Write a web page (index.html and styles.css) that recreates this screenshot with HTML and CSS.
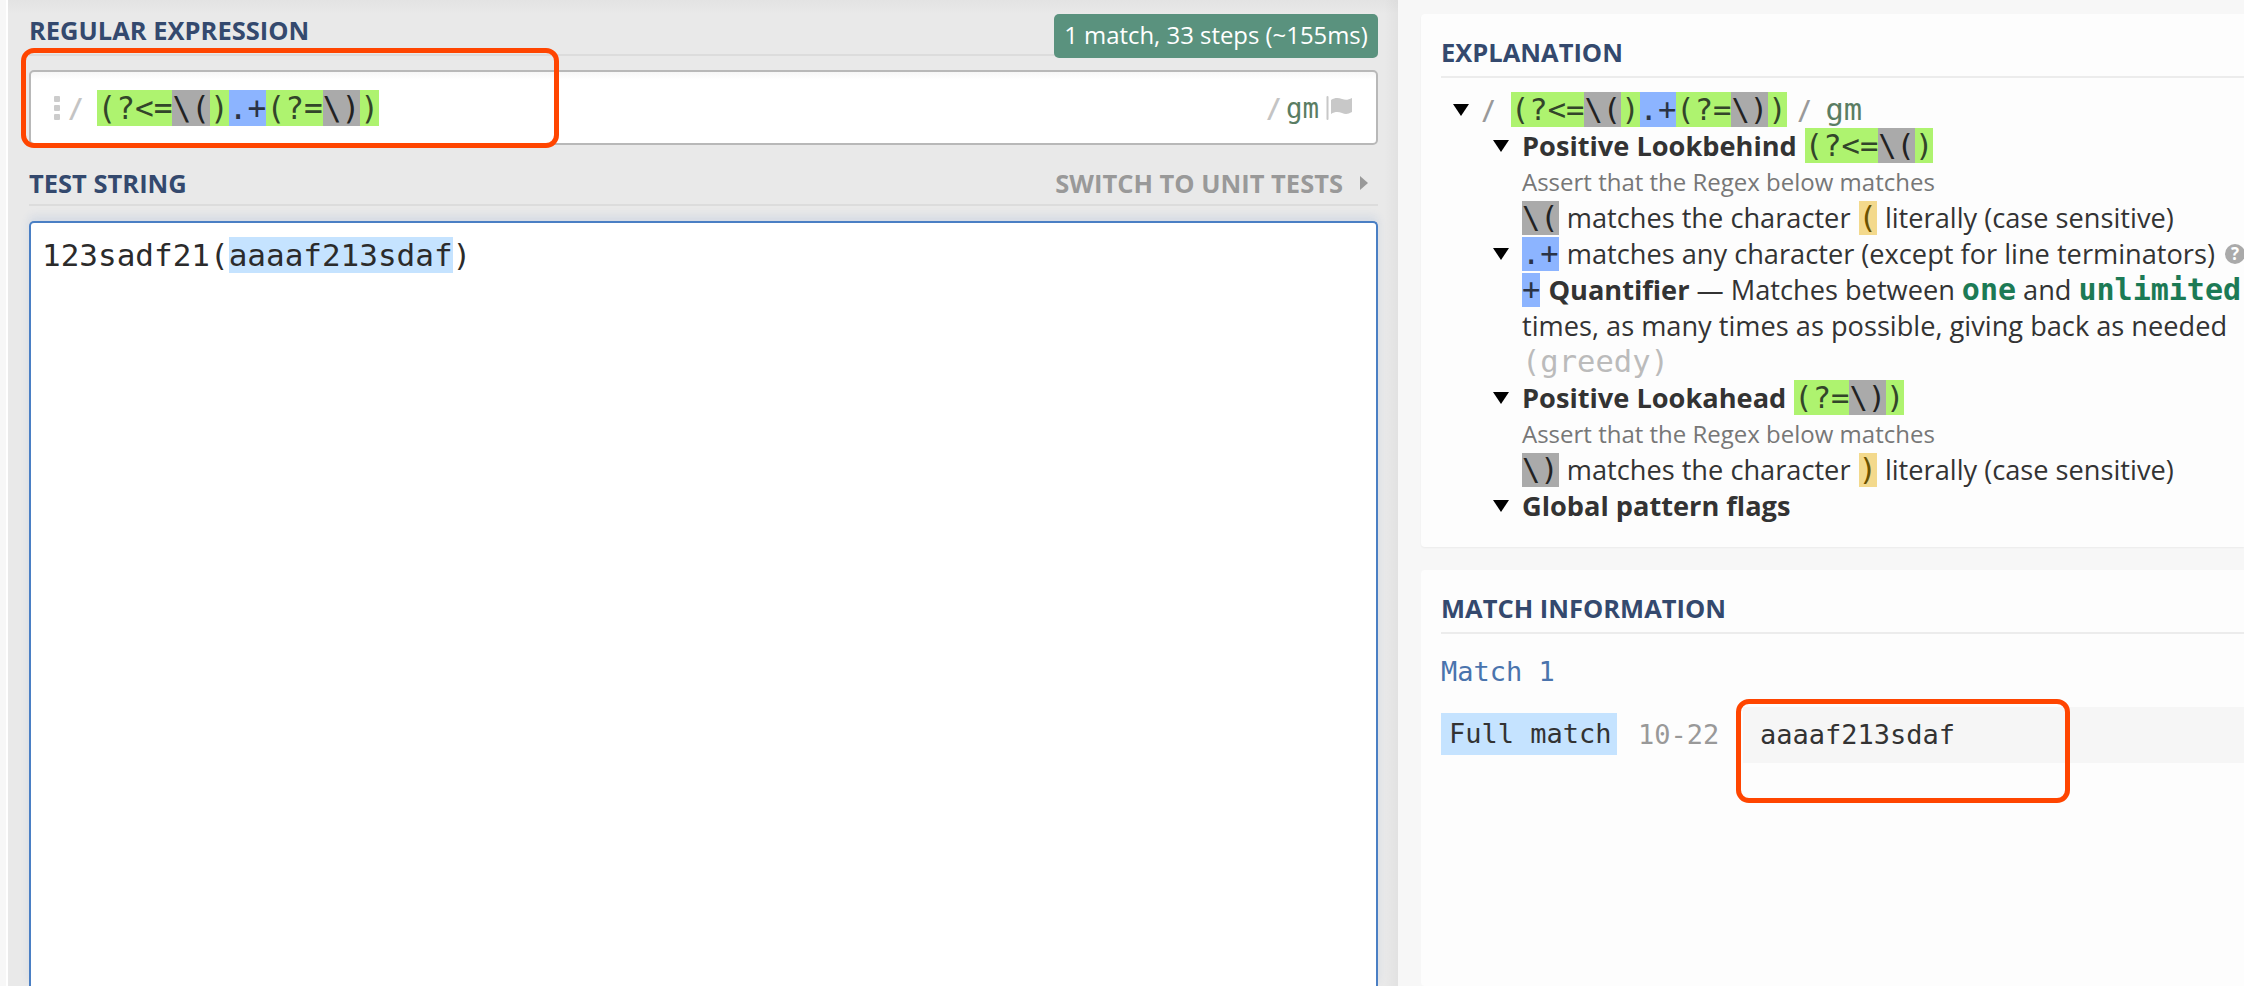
FILE: index.html
```html
<!DOCTYPE html>
<html lang="en">
<head>
<meta charset="utf-8">
<title>regex</title>
<link rel="stylesheet" href="styles.css">
</head>
<body>
<main class="editor">
  <header class="head head-regex">
    <h2 class="title">REGULAR EXPRESSION</h2>
    <span class="badge">1 match, 33 steps (~155ms)</span>
  </header>
  <div class="regex-box">
    <span class="grip"><i></i><i></i><i></i></span>
    <span class="slash slash-open">/</span>
    <span class="pattern mono"><span class="g">(?&lt;=</span><span class="k">\(</span><span class="g">)</span><span class="b">.+</span><span class="g">(?=</span><span class="k">\)</span><span class="g">)</span></span>
    <span class="slash slash-close">/</span>
    <span class="flags mono">gm</span>
    <svg class="flag" viewBox="0 0 27 24" aria-hidden="true"><path d="M1.5 1v22" stroke="#c8c8c8" stroke-width="2" fill="none" stroke-linecap="round"/><path d="M5 4c4-2.4 7-2.4 11-1 3.5 1.2 6 1 10-1v14c-4 2.2-6.500 2.400-10 1-4-1.500-7-1.400-11 1z" fill="#c8c8c8"/></svg>
  </div>
  <header class="head head-test">
    <h2 class="title">TEST STRING</h2>
    <span class="switch">SWITCH TO UNIT TESTS<i class="arrow"></i></span>
  </header>
  <div class="test-box mono">123sadf21(<span class="hit">aaaaf213sdaf</span>)</div>
</main>
<aside class="side">
  <section class="card card-explain">
    <h2 class="title card-title">EXPLANATION</h2>
    <div class="tree">
      <div class="row row-top"><i class="tri"></i><span class="slash-x">/</span><span class="mono ex-pattern"><span class="g">(?&lt;=</span><span class="k">\(</span><span class="g">)</span><span class="b">.+</span><span class="g">(?=</span><span class="k">\)</span><span class="g">)</span></span><span class="slash-x slash-x2">/</span><span class="mono ex-flags">gm</span></div>
      <div class="row"><i class="tri tri-in"></i><strong>Positive Lookbehind</strong><span class="mono gapl"><span class="g">(?&lt;=</span><span class="k">\(</span><span class="g">)</span></span></div>
      <div class="row desc"><i class="spacer"></i>Assert that the Regex below matches</div>
      <div class="row"><i class="spacer"></i><span class="mono k">\(</span><span class="gap">matches the character</span><span class="mono y gapl">(</span><span class="gap">literally (case sensitive)</span></div>
      <div class="row"><i class="tri tri-in"></i><span class="mono b">.+</span><span class="gap">matches any character (except for line terminators)</span><span class="help">?</span></div>
      <div class="row"><i class="spacer"></i><span class="mono b">+</span><strong class="gap">Quantifier</strong><span class="gapw">— Matches between</span><span class="mono green gapw">one</span><span class="gapw">and</span><span class="mono green gapw">unlimited</span></div>
      <div class="row"><i class="spacer"></i>times, as many times as possible, giving back as needed</div>
      <div class="row"><i class="spacer"></i><span class="mono greedy">(greedy)</span></div>
      <div class="row"><i class="tri tri-in"></i><strong>Positive Lookahead</strong><span class="mono gapl"><span class="g">(?=</span><span class="k">\)</span><span class="g">)</span></span></div>
      <div class="row desc"><i class="spacer"></i>Assert that the Regex below matches</div>
      <div class="row"><i class="spacer"></i><span class="mono k">\)</span><span class="gap">matches the character</span><span class="mono y gapl">)</span><span class="gap">literally (case sensitive)</span></div>
      <div class="row"><i class="tri tri-in"></i><strong>Global pattern flags</strong></div>
    </div>
  </section>
  <section class="card card-match">
    <h2 class="title card-title">MATCH INFORMATION</h2>
    <div class="match-name mono">Match 1</div>
    <div class="match-row mono">
      <span class="match-label">Full match</span>
      <span class="match-pos">10-22</span>
      <span class="match-value">aaaaf213sdaf</span>
    </div>
  </section>
</aside>
<div class="mark mark-regex"></div>
<div class="mark mark-value"></div>
</body>
</html>
```
FILE: styles.css
```css
* { box-sizing: border-box; }
html, body { margin: 0; height: 986px; overflow: hidden; }
body {
  display: flex;
  background: #f7f7f7;
  font-family: "Open Sans", sans-serif;
  color: #333;
  position: relative;
  width: 2244px;
}
.mono { font-family: "DejaVu Sans Mono", monospace; }
.title {
  margin: 0;
  font-size: 25.5px;
  font-weight: 700;
  color: #34496e;
  line-height: 34px;
}

/* left editor */
.editor {
  margin-left: 6px;
  border-left: 2px solid #fff;
  width: 1392px;
  height: 986px;
  display: flex;
  flex-direction: column;
  padding: 0 20px 0 21px;
  background:
    linear-gradient(to left, rgba(0,0,0,.03), rgba(0,0,0,0) 14px),
    linear-gradient(#e3e3e3, #e9e9e9 14px);
}
.head {
  display: flex;
  justify-content: space-between;
  border-bottom: 2px solid #dcdcdc;
  flex: none;
}
.head-regex { height: 42px; margin-top: 14px; align-items: flex-start; }
.head-regex .title { margin-top: -1px; }
.badge {
  height: 44px;
  width: 324px;
  border-radius: 5px;
  background: #5a927e;
  color: #fff;
  font-size: 23.9px;
  line-height: 42px;
  text-align: center;
  white-space: nowrap;
  flex: none;
}
.regex-box {
  flex: none;
  margin-top: 14px;
  height: 75px;
  border: 2px solid #b8b8b8;
  border-radius: 5px;
  background: linear-gradient(#f6f6f6, #fff 8px);
  display: flex;
  align-items: center;
  font-size: 31.2px;
}
.grip { display: flex; flex-direction: column; gap: 3px; margin-left: 23px; }
.grip i { display: block; width: 6px; height: 6px; border-radius: 1px; background: #ccc; }
.slash { color: #c4c4c4; font-family: "Open Sans", sans-serif; font-size: 31px; font-weight: 400; }
.slash-open { margin-left: 10px; transform: scaleX(1.2); }
.pattern { margin-left: 16px; line-height: 36px; }
.slash-close { margin-left: auto; transform: scaleX(1.2); }
.flags { color: #5a7d63; font-size: 27.5px; margin-left: 7px; line-height: 36px; }
.flag { width: 27px; height: 24px; margin: 0 23px 0 7px; flex: none; }
.g { background: #aef36f; color: #33452a; }
.k { background: #aaa; color: #222; }
.b { background: #8cb4ff; color: #2a3345; }
.y { background: #f3d98c; color: #6b5200; }
.head-test { height: 61px; align-items: center; padding-top: 16px; }
.switch {
  font-size: 25.5px;
  font-weight: 700;
  color: #999;
  display: flex;
  align-items: center;
  margin-right: 10px;
}
.arrow {
  display: block;
  margin-left: 17px;
  border-left: 8px solid #999;
  border-top: 7px solid transparent;
  border-bottom: 7px solid transparent;
}
.test-box {
  flex: 1;
  margin-top: 15px;
  background: #fff;
  border: 2px solid #4a7fc4;
  border-bottom: 0;
  border-radius: 5px 5px 0 0;
  padding: 12px 11px;
  font-size: 31px;
  line-height: 40px;
  color: #2b2b2b;
  white-space: nowrap;
  box-shadow: 0 -5px 8px rgba(74,127,196,.12);
}
.hit { background: #c5e3ff; }

/* right column */
.side {
  margin-left: 23px;
  flex: 1;
  min-width: 0;
  display: flex;
  flex-direction: column;
  gap: 23px;
  padding-top: 14px;
}
.card {
  background: #fdfdfd;
  border-radius: 4px 0 0 4px;
  padding-left: 20px;
  overflow: hidden;
  flex: none;
}
.card-explain { height: 533px; box-shadow: 0 1px 2px rgba(0,0,0,.05); }
.card-match { flex: 1; }
.card-title {
  height: 64px;
  padding: 21px 0 0 0;
  border-bottom: 2px solid #ececec;
}
.tree { margin-top: 14px; font-size: 27.2px; }
.row {
  display: flex;
  align-items: center;
  height: 36px;
  white-space: nowrap;
  line-height: 34px;
}
.row .mono { font-size: 30.5px; line-height: 34px; }
.spacer { flex: none; width: 81px; }
.tri {
  flex: none;
  width: 0;
  height: 0;
  margin-left: 12px;
  margin-right: 13px;
  border-top: 12px solid #000;
  border-left: 8px solid transparent;
  border-right: 8px solid transparent;
}
.tri-in { margin-left: 52px; margin-right: 13px; }
.slash-x { color: #999; font-size: 31px; width: 29px; transform: scaleX(1.1); transform-origin: left; }
.slash-x2 { margin-left: 11px; width: 28px; }
.row .ex-flags { color: #5a7d63; }
.gap { margin-left: 8px; }
.gapl { margin-left: 8px; }
.gapw { margin-left: 7px; }
.desc { font-size: 24px; color: #777; }
.row .green { color: #1c7a55; font-weight: 700; font-size: 30px; }
.row .greedy { color: #bbb; }
.help {
  flex: none;
  margin-left: 10px;
  width: 20px;
  height: 20px;
  border-radius: 50%;
  background: #aaa;
  color: #fff;
  font-size: 17px;
  font-weight: 700;
  line-height: 20px;
  text-align: center;
}
.match-name { margin-top: 21px; font-size: 27px; line-height: 34px; color: #4a74ad; }
.match-row {
  margin-top: 18px;
  display: flex;
  align-items: center;
  height: 56px;
  font-size: 27px;
  white-space: nowrap;
}
.match-label { background: #c5e3ff; height: 42px; line-height: 42px; padding: 0 8px; margin-top: -2px; width: 176px; }
.match-pos { margin-left: 21px; color: #999; width: 81px; margin-top: -2px; }
.match-value { margin-left: 24px; flex: 1; height: 56px; line-height: 56px; background: #f6f6f6; padding-left: 17px; }

/* annotations */
.mark { position: absolute; border: 5px solid #ff4500; border-radius: 13px; }
.mark-regex { left: 21px; top: 48px; width: 538px; height: 100px; }
.mark-value { left: 1736px; top: 699px; width: 334px; height: 104px; }
```
